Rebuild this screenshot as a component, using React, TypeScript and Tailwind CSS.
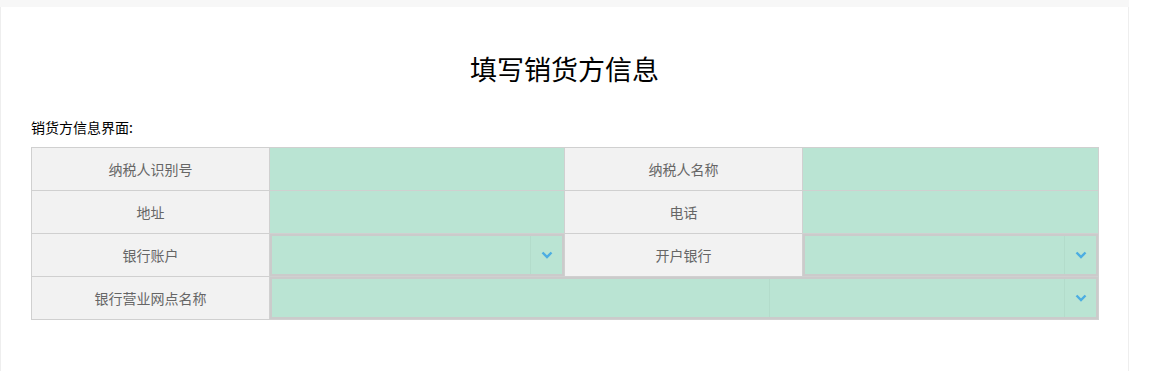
import React from "react";

const font = { fontFamily: '"Microsoft YaHei", "Noto Sans CJK SC", sans-serif' };

const Chevron = () => (
  <svg width="12" height="8" viewBox="0 0 12 8">
    <polyline points="1.5,1.5 6,6 10.5,1.5" fill="none" stroke="#4cade2" strokeWidth="2.4" />
  </svg>
);

const Label = ({ text }: { text: string }) => (
  <td className="border border-[#d0d0d0] bg-[#f2f2f2] text-center text-[14px] text-[#666] h-[43px] p-0">{text}</td>
);

const Input = () => <td className="border border-[#d0d0d0] bg-[#bae4d3] h-[43px] p-0"></td>;

const SelectBox = ({ split }: { split?: boolean }) => (
  <div className="h-[42px] flex border-2 border-[#cbcbcb] bg-[#bae4d3]">
    <div className="flex-1 flex">
      {split && <div className="w-[498px] border-r border-[#b3dccb]"></div>}
    </div>
    <div className="w-[32px] border-l border-[#b3dccb] flex items-center justify-center">
      <Chevron />
    </div>
  </div>
);

export default function App() {
  return (
    <div className="w-[1155px] h-[371px] bg-white overflow-hidden" style={font}>
      <div className="w-[1129px] h-full bg-[#f7f7f7] pt-[7px]">
        <div className="h-full bg-white border-x border-[#eeeeee] pl-[30px]">
          <h1 className="text-center text-[27px] text-black pt-[46px] pb-[30px] leading-[32px] pr-[30px]">填写销货方信息</h1>
          <div className="text-[14px] text-black leading-[18px] mt-[3px] mb-[11px]">销货方信息界面:</div>
          <table className="border-collapse table-fixed w-[1067px]">
            <colgroup>
              <col className="w-[238px]" />
              <col className="w-[295px]" />
              <col className="w-[238px]" />
              <col className="w-[296px]" />
            </colgroup>
            <tbody>
              <tr>
                <Label text="纳税人识别号" />
                <Input />
                <Label text="纳税人名称" />
                <Input />
              </tr>
              <tr>
                <Label text="地址" />
                <Input />
                <Label text="电话" />
                <Input />
              </tr>
              <tr>
                <Label text="银行账户" />
                <td className="border border-[#d0d0d0] p-0 bg-[#bae4d3]"><SelectBox /></td>
                <Label text="开户银行" />
                <td className="border border-[#d0d0d0] p-0 bg-[#bae4d3]"><SelectBox /></td>
              </tr>
              <tr>
                <Label text="银行营业网点名称" />
                <td colSpan={3} className="border border-[#d0d0d0] p-0 bg-[#bae4d3]"><SelectBox split /></td>
              </tr>
            </tbody>
          </table>
        </div>
      </div>
    </div>
  );
}
